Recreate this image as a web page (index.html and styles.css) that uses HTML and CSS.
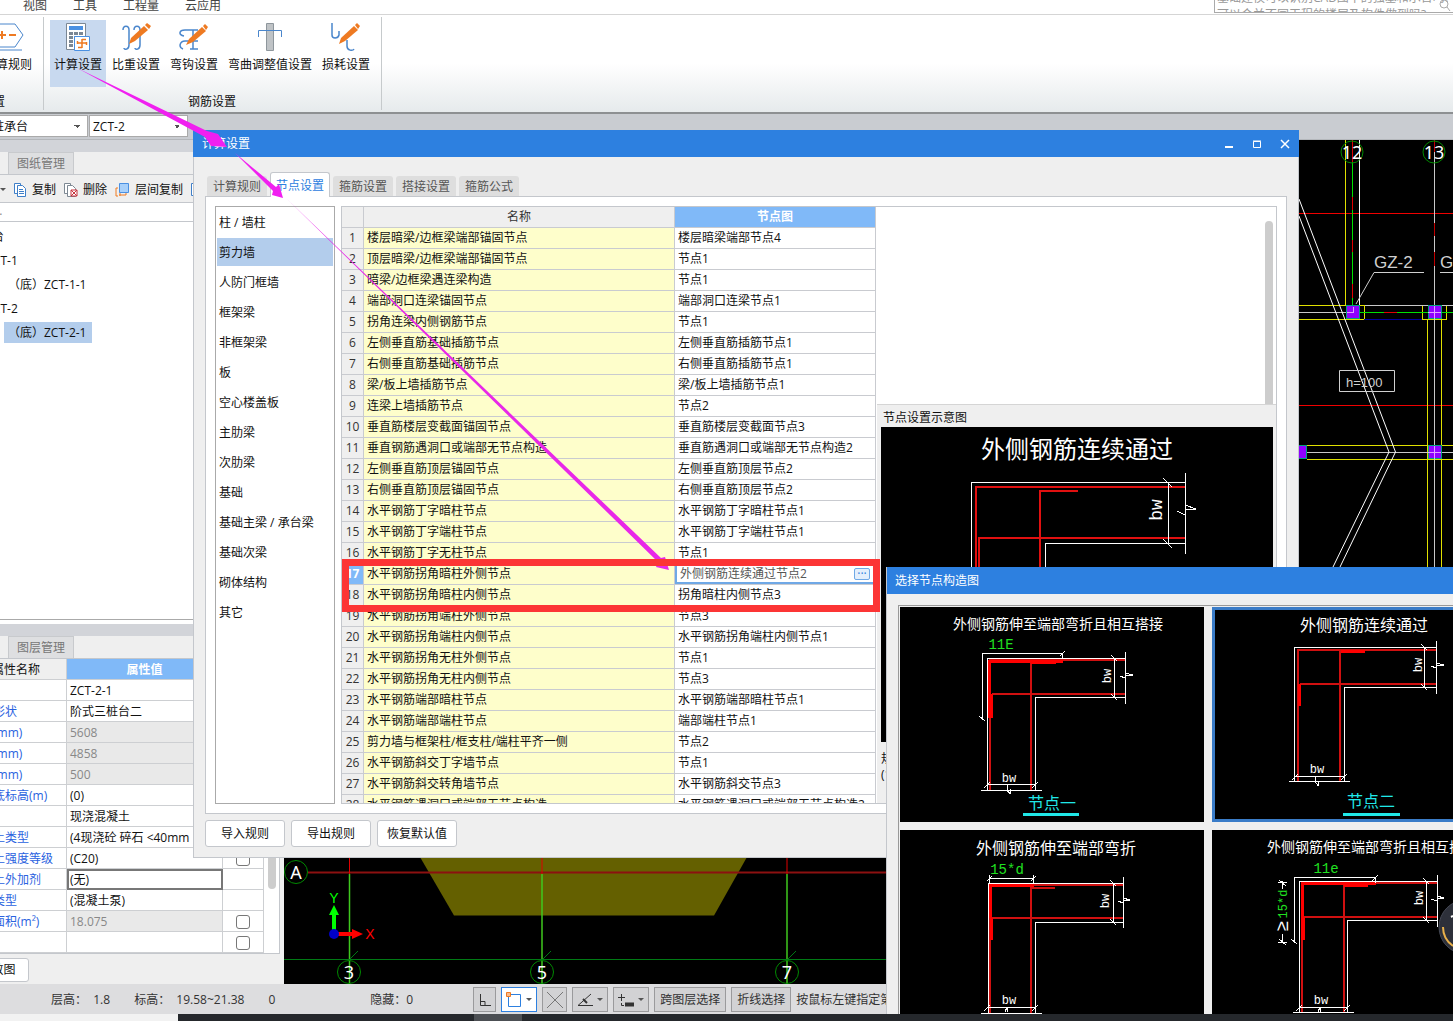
FILE: index.html
```
<!doctype html>
<html lang="zh-CN">
	<head>
		<meta charset="utf-8">
		<title>计算设置</title>
		<meta name="viewport" content="width=device-width,initial-scale=1.0">
		<link rel="stylesheet" href="styles.css">
	</head>
	<body>
		<div class="menuBar">
			<nav>
				<a href="#">视图</a>
				<a href="#">工具</a>
				<a href="#">工程量</a>
				<a href="#">云应用</a>
			</nav>
			<div class="ticker">
				<div class="tickerText">
					<p>基础建模可以识别CAD图中的独基和承台吗?</p>
					<p>可以合并不同工程的楼层及构件做到吗?</p>
				</div>
				<svg width="12" height="12" viewBox="0 0 12 12" fill="none" stroke="#aaa"><circle cx="5" cy="4" r="4"/><path d="M8 7l3 4"/></svg>
			</div>
		</div>

		<div class="ribbon">
			<section class="group first">
				<div class="tools">
					<button>
						<svg width="48" height="30" viewBox="-4 0 48 30" fill="none"><path d="M9 2h18l8 11-8 12H9L1 13z" stroke="#4a86cc"/><path d="M11 28h23" stroke="#4a86cc"/><path d="M10 13h8m-4-4v8m7-4h7" stroke="#ee7a22" stroke-width="2"/></svg>
						<span>计算规则</span>
					</button>
				</div>
				<h2>设置</h2>
			</section>
			<section class="group">
				<div class="tools">
					<button class="selected">
						<svg width="30" height="30" viewBox="0 0 30 30" fill="none"><path d="M3.500 1.500h19v26h-19z" fill="#fff" stroke="#7b8794"/><path d="M6 4h14v4H6z" fill="#4a90e2"/><path d="M6 10h4v3H6zm5 0h4v3h-4zm5 0h4v3h-4zM6 14h4v3H6zm5 0h4v3h-4zM6 18h4v3H6zM6 22h4v3H6z" fill="#7b8794"/><path d="M11.500 14.500h15v14h-15z" fill="#fff" stroke="#4a90e2"/><path d="M14 21h10M19 17v9M19 17.500h4M15 25.500h4M14.500 19v3M23.500 20v3" stroke="#ee7a22" stroke-width="1.500"/></svg>
						<span>计算设置</span>
					</button>
					<button>
						<svg width="30" height="30" viewBox="0 0 30 30" fill="none"><path d="M2 8c0-5 6-5 6 0v15c0 5-5 5-5 3M13 8c0-5 6-5 6 0v15c0 5-5 5-5 3" stroke="#4a86cc" stroke-width="1.500"/><path d="M8 22l2-6L23 4l4 4-13 11z" fill="#ee7a22"/><path d="M24 3l2-2 4 3-2 3z" fill="#ee7a22"/></svg>
						<span>比重设置</span>
					</button>
					<button>
						<svg width="30" height="30" viewBox="0 0 30 30" fill="none"><path d="M5 14c-6-1-5-6 1-6h13M4 27c-5-2-3-8 2-8h13M14 8v19m-3 0h8" stroke="#4a86cc" stroke-width="1.500"/><path d="M7 23l3-6L23 5l4 4-13 11z" fill="#ee7a22"/><path d="M24 4l2-2 3 3-2 3z" fill="#ee7a22"/></svg>
						<span>弯钩设置</span>
					</button>
					<button>
						<svg width="30" height="30" viewBox="0 0 30 30" fill="none"><path d="M3.500 15V8.500h23V15" stroke="#4a86cc"/><path d="M11.500 1.500h7v27h-7z" fill="#bfc3c6" stroke="#8e969c"/><path d="M11 8.500h8" stroke="#4a86cc"/></svg>
						<span>弯曲调整值设置</span>
					</button>
					<button>
						<svg width="30" height="30" viewBox="0 0 30 30" fill="none"><path d="M1 1v12c0 4 6 4 7 0V9M16 18v6c0 5 6 5 7 3" stroke="#4a86cc" stroke-width="1.500"/><path d="M8 22l2-6L23 4l4 4-13 11z" fill="#ee7a22"/><path d="M24 3l2-2 3 3-2 3z" fill="#ee7a22"/></svg>
						<span>损耗设置</span>
					</button>
				</div>
				<h2>钢筋设置</h2>
			</section>
		</div>

		<div class="selectBar">
			<select class="type" aria-label="构件类型"><option>桩承台</option></select>
			<select aria-label="构件"><option>ZCT-2</option></select>
		</div>

		<main>
			<aside class="dock">
				<div class="dockTabs"><button>构件列表</button><button class="off">图纸管理</button></div>
				<div class="dockTools">
					<button class="new">新建<i class="caret"></i></button>
					<button><svg width="13" height="14" viewBox="0 0 13 14" fill="#fff" stroke="#3f7fc8"><path d="M.5.5h6v10h-6z"/><path d="M3.500 2.500h5l3 3v8h-8zM5 6.500h4M5 8.500h5M5 10.500h5"/></svg>复制</button>
					<button><svg width="14" height="14" viewBox="0 0 14 14" fill="#fff" stroke="#7d8893"><path d="M.5.5h6v10h-6z"/><path d="M3.500 2.500h5l3 3v8h-8z"/><path d="M7 7h6v6H7zM7 7l6 6M13 7l-6 6" stroke="#c8323c"/></svg>删除</button>
					<button><svg width="15" height="14" viewBox="0 0 15 14" fill="none"><path d="M3 5H1v8M5 8v5M1 13h2m1-1h7v-2" stroke="#ee7a22"/><path d="M4.500.5h9v9h-9z" fill="#a8d0fa" stroke="#4a90e2"/></svg>层间复制</button>
					<button><svg width="13" height="14" viewBox="0 0 13 14" fill="#fff" stroke="#3f7fc8"><path d="M.5.5h9v12h-9z"/></svg></button>
				</div>
				<div class="filter">搜索...</div>
				<ul class="tree">
					<li><span>桩承台</span></li>
					<li class="sub"><span>ZCT-1</span></li>
					<li class="leaf"><span>（底）ZCT-1-1</span></li>
					<li class="sub"><span>ZCT-2</span></li>
					<li class="leaf"><span class="selected">（底）ZCT-2-1</span></li>
				</ul>
				<div class="dockTabs"><button>属性列表</button><button class="off">图层管理</button></div>
				<div class="props">
					<table>
						<tr><th class="name">属性名称</th><th class="value">属性值</th><th class="extra">附加</th></tr>
						<tr><td>名称</td><td>ZCT-2-1</td><td></td></tr>
						<tr><td class="blue">截面形状</td><td>阶式三桩台二</td><td></td></tr>
						<tr><td class="blue">长度(mm)</td><td class="locked">5608</td><td></td></tr>
						<tr><td class="blue">宽度(mm)</td><td class="locked">4858</td><td></td></tr>
						<tr><td class="blue">高度(mm)</td><td class="locked">500</td><td></td></tr>
						<tr><td class="blue">相对底标高(m)</td><td>(0)</td><td></td></tr>
						<tr><td>材质</td><td>现浇混凝土</td><td></td></tr>
						<tr><td class="blue">混凝土类型</td><td>(4现浇砼 碎石 &lt;40mm</td><td></td></tr>
						<tr><td class="blue">混凝土强度等级</td><td>(C20)</td><td><input type="checkbox" aria-label="附加强度等级"></td></tr>
						<tr><td class="blue">混凝土外加剂</td><td class="current">(无)</td><td></td></tr>
						<tr><td class="blue">泵送类型</td><td>(混凝土泵)</td><td></td></tr>
						<tr><td class="blue">截面面积(m²)</td><td class="locked">18.075</td><td><input type="checkbox" aria-label="附加截面面积"></td></tr>
						<tr><td></td><td></td><td><input type="checkbox" aria-label="附加"></td></tr>
					</table>
					<div class="scroll"></div>
				</div>
				<div class="dockFoot"><button>参数图</button></div>
			</aside>

			<svg class="cad" viewBox="284 140 1169 844" preserveAspectRatio="xMidYMid slice" fill="none">
				<!-- upper right plan -->
				<g shape-rendering="crispEdges">
					<path d="M1299 213.500h154M1299 405.500h154" stroke="#f00000"/>
					<path d="M1345.500 140v165M1299 305.500h65v14h-65M1422.500 305.500h24v14h-24zM1427.500 320v247M1441.500 320v247M1453 445.500h-146M1307 459.500h146" stroke="#e0e000"/>
					<path d="M1359.500 140v165" stroke="#fff"/>
					<path d="M1352.500 140v172M1359 312.500h94" stroke="#00e000"/>
					<path d="M1352.500 140v22m0 35v13m0 30v12m0 32v14M1384 312.500h13" stroke="#e00000"/>
					<path d="M1364 319.500h58" stroke="#0000a0"/>
					<path d="M1365 305.500h88M1299 312.500h53M1299 452.500h154M1434.500 140v427" stroke="#c8c8c8"/>
					<path d="M1434.500 140v12m0 71v13m0 16v14" stroke="#c00000"/>
					<g fill="#9000ff" stroke="#00a080">
						<path d="M1346.500 305.500h13v13h-13zM1428.500 305.500h13v13h-13zM1428.500 445.500h13v13h-13zM1293.500 445.500h13v13h-13z"/>
					</g>
					<path d="M1428 312.500h13M1434.500 306v13M1428 452.500h13M1434.500 446v13M1347 312.500h6v-6" stroke="#e0a0ff"/>
				</g>
				<path d="M1299 199l96.500 253L1340 567M1299 216l90 236-56 115" stroke="#fff"/>
				<path d="M1356 304l18-31.500h50M1440 272.500h13M1339.500 370.500h55v21h-55z" stroke="#d0d0d0"/>
				<g class="cadText">
					<text x="1374" y="268">GZ-2</text>
					<text x="1440" y="268">GZ-2</text>
					<text x="1346" y="387" class="small">h=100</text>
				</g>
				<g stroke="#008a00"><circle cx="1352" cy="152" r="11"/><circle cx="1434" cy="152" r="11"/></g>
				<g class="axisText"><text x="1352" y="159">12</text><text x="1434" y="159">13</text></g>
				<!-- lower plan with the pile cap -->
				<path d="M420 857l34 58.500h260L747 857z" fill="#646000"/>
				<path d="M308 872.500h640" stroke="#8c1010" stroke-width="2"/>
				<path d="M349.500 857v17M542 857v17M787 857v17" stroke="#e00000"/>
				<path d="M349.500 874v110M542 874v110M787 874v110" stroke="#3fc81e" stroke-width="1.500"/>
				<path d="M284 959.500h640M349 960l9-9M542 960l9-9M787 960l9-9" stroke="#007a14"/>
				<g stroke="#008a00"><circle cx="296" cy="872" r="11.500"/><circle cx="349" cy="972" r="11.500"/><circle cx="542" cy="972" r="11.500"/><circle cx="787" cy="972" r="11.500"/></g>
				<g class="axisText"><text x="296" y="879">A</text><text x="349" y="979">3</text><text x="542" y="979">5</text><text x="787" y="979">7</text></g>
				<path d="M334 934v-22" stroke="#0f0" stroke-width="4"/>
				<path d="M329 915l5-10 5 10z" fill="#0f0"/>
				<path d="M334 934h20" stroke="red" stroke-width="4"/>
				<path d="M352 929l11 5-11 5z" fill="red"/>
				<circle cx="334" cy="934" r="5" fill="#0000c8"/>
				<text class="ucs" x="334" y="903" fill="#0f0">Y</text>
				<text class="ucs" x="370" y="939" fill="red">X</text>
			</svg>
		</main>

		<footer class="status">
			<span>层高：&nbsp; 1.8</span>
			<span>标高：&nbsp; 19.58~21.38</span>
			<span>0</span>
			<span class="hiddenCount">隐藏：0</span>
			<div class="snap">
				<button aria-label="正交"><svg width="16" height="16" viewBox="0 0 16 16" fill="none" stroke="#333"><path d="M3.500 2v11.500H14M4 9.500h4v4"/></svg></button>
				<button class="on" aria-label="点选"><svg width="18" height="16" viewBox="0 0 18 16" fill="none"><path d="M3.500 2.500h12v12h-12z" stroke="#2d80e0"/><path d="M1.500.5h4v4h-4z" fill="#f9b98a" stroke="#ee7a22"/></svg><i class="caret"></i></button>
				<button aria-label="交点"><svg width="18" height="18" viewBox="0 0 18 18" fill="none" stroke="#777"><path d="M1 1l16 16M17 1L1 17"/></svg></button>
				<button aria-label="角度"><svg width="18" height="16" viewBox="0 0 18 16" fill="none" stroke="#333"><path d="M15 2L2 13.500h15"/><path d="M7 7l4 4" stroke-width="2"/></svg><i class="caret"></i></button>
				<button aria-label="偏移"><svg width="18" height="16" viewBox="0 0 18 16" fill="none" stroke="#333"><path d="M1 5.500h7M4.500 2v7M4.500 11v2.500H7"/><path d="M8 12.500h9" stroke-width="4"/></svg><i class="caret"></i></button>
				<button>跨图层选择</button>
				<button>折线选择</button>
			</div>
			<span class="hint">按鼠标左键指定第一个角点</span>
		</footer>
		<div class="taskbar"><div class="light"></div><div class="task"></div></div>

		<section class="dialog settings">
			<header>
				<h1>计算设置</h1>
				<button aria-label="最小化"><svg width="10" height="10" viewBox="0 0 10 10" stroke="#fff" stroke-width="2"><path d="M1 8h8"/></svg></button>
				<button aria-label="最大化"><svg width="10" height="10" viewBox="0 0 10 10" fill="none" stroke="#fff"><path d="M1.500 2.500h7v6h-7zM1 2h8"/></svg></button>
				<button aria-label="关闭"><svg width="10" height="10" viewBox="0 0 10 10" stroke="#fff" stroke-width="1.500"><path d="M1 1l8 8M9 1L1 9"/></svg></button>
			</header>
			<div class="tabs">
				<button>计算规则</button>
				<button class="selected">节点设置</button>
				<button>箍筋设置</button>
				<button>搭接设置</button>
				<button>箍筋公式</button>
			</div>
			<div class="panel">
				<ul class="kinds">
					<li>柱 / 墙柱</li>
					<li class="selected">剪力墙</li>
					<li>人防门框墙</li>
					<li>框架梁</li>
					<li>非框架梁</li>
					<li>板</li>
					<li>空心楼盖板</li>
					<li>主肋梁</li>
					<li>次肋梁</li>
					<li>基础</li>
					<li>基础主梁 / 承台梁</li>
					<li>基础次梁</li>
					<li>砌体结构</li>
					<li>其它</li>
				</ul>
				<div class="content">
					<div class="nodes">
						<table>
							<tr><th class="num"></th><th class="name">名称</th><th class="value">节点图</th></tr>
							<tr><th>1</th><td>楼层暗梁/边框梁端部锚固节点</td><td>楼层暗梁端部节点4</td></tr>
							<tr><th>2</th><td>顶层暗梁/边框梁端部锚固节点</td><td>节点1</td></tr>
							<tr><th>3</th><td>暗梁/边框梁遇连梁构造</td><td>节点1</td></tr>
							<tr><th>4</th><td>端部洞口连梁锚固节点</td><td>端部洞口连梁节点1</td></tr>
							<tr><th>5</th><td>拐角连梁内侧钢筋节点</td><td>节点1</td></tr>
							<tr><th>6</th><td>左侧垂直筋基础插筋节点</td><td>左侧垂直筋插筋节点1</td></tr>
							<tr><th>7</th><td>右侧垂直筋基础插筋节点</td><td>右侧垂直筋插筋节点1</td></tr>
							<tr><th>8</th><td>梁/板上墙插筋节点</td><td>梁/板上墙插筋节点1</td></tr>
							<tr><th>9</th><td>连梁上墙插筋节点</td><td>节点2</td></tr>
							<tr><th>10</th><td>垂直筋楼层变截面锚固节点</td><td>垂直筋楼层变截面节点3</td></tr>
							<tr><th>11</th><td>垂直钢筋遇洞口或端部无节点构造</td><td>垂直筋遇洞口或端部无节点构造2</td></tr>
							<tr><th>12</th><td>左侧垂直筋顶层锚固节点</td><td>左侧垂直筋顶层节点2</td></tr>
							<tr><th>13</th><td>右侧垂直筋顶层锚固节点</td><td>右侧垂直筋顶层节点2</td></tr>
							<tr><th>14</th><td>水平钢筋丁字暗柱节点</td><td>水平钢筋丁字暗柱节点1</td></tr>
							<tr><th>15</th><td>水平钢筋丁字端柱节点</td><td>水平钢筋丁字端柱节点1</td></tr>
							<tr><th>16</th><td>水平钢筋丁字无柱节点</td><td>节点1</td></tr>
							<tr class="current"><th>17</th><td>水平钢筋拐角暗柱外侧节点</td><td><div class="editor">外侧钢筋连续通过节点2<button aria-label="选择节点">···</button></div></td></tr>
							<tr><th>18</th><td>水平钢筋拐角暗柱内侧节点</td><td>拐角暗柱内侧节点3</td></tr>
							<tr><th>19</th><td>水平钢筋拐角端柱外侧节点</td><td>节点3</td></tr>
							<tr><th>20</th><td>水平钢筋拐角端柱内侧节点</td><td>水平钢筋拐角端柱内侧节点1</td></tr>
							<tr><th>21</th><td>水平钢筋拐角无柱外侧节点</td><td>节点1</td></tr>
							<tr><th>22</th><td>水平钢筋拐角无柱内侧节点</td><td>节点3</td></tr>
							<tr><th>23</th><td>水平钢筋端部暗柱节点</td><td>水平钢筋端部暗柱节点1</td></tr>
							<tr><th>24</th><td>水平钢筋端部端柱节点</td><td>端部端柱节点1</td></tr>
							<tr><th>25</th><td>剪力墙与框架柱/框支柱/端柱平齐一侧</td><td>节点2</td></tr>
							<tr><th>26</th><td>水平钢筋斜交丁字墙节点</td><td>节点1</td></tr>
							<tr><th>27</th><td>水平钢筋斜交转角墙节点</td><td>水平钢筋斜交节点3</td></tr>
							<tr><th>28</th><td>水平钢筋遇洞口或端部无节点构造</td><td>水平钢筋遇洞口或端部无节点构造2</td></tr>
						</table>
					</div>
					<div class="side">
						<div class="blank"><div class="scroll"></div></div>
						<div class="preview">
							<h2>节点设置示意图</h2>
							<svg viewBox="881 427 392 316" preserveAspectRatio="xMidYMin slice" fill="none" shape-rendering="crispEdges">
								<path d="M976 743V487H1185M1040 743V491H1078M979 743V538H1185" stroke="#e01010" stroke-width="2"/>
								<path d="M971.500 743V482.500H1185M1045.500 743V543.500H1185M1185.500 473v81M1168.500 482v62M1163 478l9 9M1163 539l9 9M1177 511l8 4v-10l11 4-11 1" stroke="#fff"/>
								<text class="draft" x="1077" y="458" font-size="24">外侧钢筋连续通过</text>
								<text class="draft bw" transform="translate(1162 510) rotate(-90)" font-size="18">bw</text>
							</svg>
							<p>规范说明：<br>(11G101-1)</p>
						</div>
					</div>
				</div>
			</div>
			<div class="buttons">
				<button>导入规则</button>
				<button>导出规则</button>
				<button>恢复默认值</button>
			</div>
		</section>

		<section class="dialog picker">
			<header><h1>选择节点构造图</h1></header>
			<div class="cards">
				<svg viewBox="900 607 304 215" fill="none" shape-rendering="crispEdges">
					<path d="M990 790V660h135M1031 790V663h25M992 694h133" stroke="#d01010" stroke-width="2"/>
					<path d="M989.500 718v-56.500h73M991.500 718v-24M1031 662.500h25" stroke="red" stroke-width="3"/>
					<path d="M987.500 790V658.500H1125M1035.500 790v-92.500H1125M1125.500 652v52M1114.500 658v40M982.500 719v-65.500h80v5M979 716l6 5M1060 656l5-5M1111 655l6 6M1111 694l6 6M1120 676l5 2v-5l8 2-8 1M981 790.500h61M987 784.500h49M984 788l6-6M1032 788l6-6M1007 784v6l3 4 1-5" stroke="#fff"/>
					<text class="draft" x="1058" y="629" font-size="14">外侧钢筋伸至端部弯折且相互搭接</text>
					<text class="draft green" x="1001" y="649" font-size="14">11E</text>
					<text class="draft bw" transform="translate(1111 676) rotate(-90)" font-size="12">bw</text>
					<text class="draft bw" x="1009" y="782" font-size="12">bw</text>
					<text class="draft cyan" x="1052" y="809" font-size="16">节点一</text>
					<path d="M1023 814.500h56" stroke="#20e8e8" stroke-width="3"/>
				</svg>
				<svg class="selected" viewBox="1212 607 304 215" fill="none" shape-rendering="crispEdges">
					<path d="M1298 781V650h138M1340 781V652h25M1300 684h136" stroke="#d01010" stroke-width="2"/>
					<path d="M1299.500 706v-22M1341 651.500h24" stroke="red" stroke-width="3"/>
					<path d="M1294.500 781V647.500h142M1344.500 781v-93.500h92M1436.500 641v53M1424.500 647v41M1421 644l6 6M1421 684l6 6M1431 666l5 2v-5l8 2-8 1M1289 781.500h61M1294 776.500h51M1292 780l6-6M1341 780l6-6M1315 776v5l3 5 1-5" stroke="#fff"/>
					<text class="draft" x="1364" y="631" font-size="16">外侧钢筋连续通过</text>
					<text class="draft bw" transform="translate(1422 665) rotate(-90)" font-size="12">bw</text>
					<text class="draft bw" x="1317" y="773" font-size="12">bw</text>
					<text class="draft cyan" x="1371" y="807" font-size="16">节点二</text>
					<path d="M1343 814.500h57" stroke="#20e8e8" stroke-width="3"/>
				</svg>
				<svg viewBox="900 830 304 215" fill="none" shape-rendering="crispEdges">
					<path d="M990 1013V885h133M1031 1013V888h24M991 918h132" stroke="#d01010" stroke-width="2"/>
					<path d="M990.500 918v-32.500h43M991.500 940v-22" stroke="red" stroke-width="3"/>
					<path d="M988.500 1013V883.500h135M1035.500 1013v-90.500h88M1123.500 877v51M1113.500 883v40M1110 880l6 6M1110 919l6 6M989 878.500h45M989.500 875v9M1033.500 875v9M987 881l5-5M1031 881l5-5M1118 901l5 2v-5l7 2-7 1M981 1013.500h61M987 1007.500h49M984 1011l6-6M1032 1011l6-6M1005 1012l2-5 1 5" stroke="#fff"/>
					<text class="draft" x="1056" y="854" font-size="16">外侧钢筋伸至端部弯折</text>
					<text class="draft green" x="1007" y="874" font-size="14">15*d</text>
					<text class="draft bw" transform="translate(1109 901) rotate(-90)" font-size="12">bw</text>
					<text class="draft bw" x="1009" y="1004" font-size="12">bw</text>
				</svg>
				<svg viewBox="1212 830 304 215" fill="none" shape-rendering="crispEdges">
					<path d="M1302 1013V883h135M1344 1013V886h24M1303 917h134" stroke="#d01010" stroke-width="2"/>
					<path d="M1302.500 940v-56.500h73M1303.500 940v-23M1344 885.500h24" stroke="red" stroke-width="3"/>
					<path d="M1299.500 1013V881.500h138M1347.500 1013v-92.500h90M1437.500 875v52M1426.500 881v40M1423 878l6 6M1423 917l6 6M1294.500 942v-64.500h80.500v5M1291 939l6 5M1372 881l6-6M1282.500 881v8M1278 882.500h9M1279 880l7 6M1282.500 934v9M1278 942.500h9M1279 939l7 6M1431 899l6 2v-5l7 2-7 1M1293 1012.500h61M1299 1007.500h49M1296 1011l6-6M1344 1011l6-6M1318 1012l2-5 1 5" stroke="#fff"/>
					<text class="draft" x="1372" y="852" font-size="14">外侧钢筋伸至端部弯折且相互搭接</text>
					<text class="draft green" x="1326" y="873" font-size="14">11e</text>
					<text class="draft green" transform="translate(1287 904) rotate(-90)" font-size="12">15*d</text>
					<text class="draft" transform="translate(1288 926) rotate(-90)" font-size="18">≥</text>
					<text class="draft bw" transform="translate(1423 898) rotate(-90)" font-size="12">bw</text>
					<text class="draft bw" x="1321" y="1004" font-size="12">bw</text>
				</svg>
			</div>
			<svg class="bubble" width="15" height="56" viewBox="0 0 15 56" fill="none"><circle cx="28" cy="28" r="27" fill="#2d303a" stroke="#454955"/><path d="M5 28q0 12 10 19" stroke="#e8b04a" stroke-width="2"/><path d="M13 18l2-1" stroke="#fff" stroke-width="2"/></svg>
		</section>

		<!-- markup drawn over the windows -->
		<svg class="marks" viewBox="0 0 1453 1021" width="1453" height="1021">
			<path d="M77 68L207 131l11 3 9 13-16-1-6-9z" fill="#f020f0"/>
			<path d="M235 153l41 34 3-3 4 14-11-3 1-4z" fill="#f020f0"/>
			<path d="M287 199L661 558l4-1 4 13-13-3 2-5z" fill="#e828e8"/>
			<rect x="345.500" y="562.500" width="531" height="46" fill="none" stroke="#fc3535" stroke-width="7"/>
		</svg>
	</body>
</html>
```
FILE: styles.css
```
*{
	margin: 0;
	padding: 0;
	box-sizing: border-box;
}
body{
	display: flex;
	flex-direction: column;
	position: relative;
	height: 100vh;
	overflow: hidden;
	background: #efefef;
	color: #111;
	font: 12px/16px "Open Sans", "Noto Sans CJK SC", sans-serif;
}
button, select, input{
	font: inherit;
	color: inherit;
}
button{
	border: none;
	background: none;
	white-space: nowrap;
}
ul{
	list-style: none;
}
h1, h2{
	font-size: 12px;
	font-weight: normal;
}
table{
	border-spacing: 0;
	table-layout: fixed;
}
.caret{
	display: inline-block;
	border: 3px solid transparent;
	border-top-color: #555;
	border-bottom: 0;
}

/**
 * menu and ribbon
 */
.menuBar{
	display: flex;
	justify-content: space-between;
	height: 15px;
	flex: none;
	overflow: hidden;
	background: #fff;
	border-bottom: 1px solid #d5d5d5;
}
.menuBar nav{
	display: flex;
	gap: 26px;
	padding-left: 23px;
	line-height: 12px;
}
.menuBar a{
	color: #444;
	text-decoration: none;
}
.ticker{
	display: flex;
	width: 239px;
	height: 13px;
	padding: 0 2px;
	overflow: hidden;
	color: #999;
	border: 1px solid #aaa;
	border-top: 0;
	border-right: 0;
}
.ticker svg{
	flex: none;
}
.tickerText{
	display: flex;
	flex-direction: column;
	justify-content: center;
	flex: 1;
	min-width: 0;
	line-height: 17px;
	white-space: nowrap;
}
.ribbon{
	display: flex;
	height: 99px;
	flex: none;
	padding: 2px 0;
	background: linear-gradient(#fff 50%, #e6eaec);
	border-bottom: 2px solid #8d9092;
}
.group{
	display: flex;
	flex-direction: column;
	justify-content: space-between;
	padding: 3px 7px 0 6px;
	border-right: 1px solid #c6cacc;
}
.group h2{
	text-align: center;
}
.tools{
	display: flex;
	gap: 2px;
}
.tools button{
	display: flex;
	flex-direction: column;
	align-items: center;
	gap: 5px;
	height: 67px;
	padding: 2px 4px;
}
.tools .selected{
	background: #c8d9ef;
}
.group.first{
	width: 44px;
	align-items: flex-end;
	overflow: hidden;
}
.group.first h2{
	padding-right: 31px;
	white-space: nowrap;
}
.selectBar{
	display: flex;
	gap: 1px;
	height: 26px;
	flex: none;
	padding: 1px 0 2px;
	background: #c9ccd1;
	border-bottom: 1px solid #b4b7bb;
}
.selectBar select{
	width: 99px;
	padding: 2px 3px 0;
	appearance: none;
	border: 1px solid #aaa;
	background: linear-gradient(45deg, transparent 50%, #555 50%) right 10px center/3px 3px no-repeat, linear-gradient(-45deg, transparent 50%, #555 50%) right 7px center/3px 3px no-repeat, #fff;
}
.selectBar .type{
	width: 100px;
	margin-left: -12px;
}

/**
 * left dock, it runs off the left edge of the window
 */
main{
	display: flex;
	flex: 1;
	min-height: 0;
}
.dock{
	display: flex;
	flex-direction: column;
	width: 318px;
	flex: none;
	margin-left: -34px;
	border-right: 4px solid #efefef;
}
.dockTabs{
	display: flex;
	flex: none;
	height: 35px;
	padding-top: 12px;
	background: linear-gradient(#d2d4d9 12px, #efefef 12px);
	border-bottom: 1px solid #c4c7cc;
}
.dockTabs button{
	width: 42px;
	overflow: hidden;
	color: transparent;
}
.dockTabs .off{
	width: 66px;
	color: #777;
	background: #dedfe1;
	border: 1px solid #c8cacd;
	border-bottom: 0;
}
.dockTools{
	display: flex;
	align-items: center;
	gap: 8px;
	height: 28px;
	flex: none;
	padding: 2px 0 0 6px;
	border-bottom: 1px solid #c4c7cc;
}
.dockTools button{
	display: flex;
	align-items: center;
	gap: 5px;
}
.dockTools .new{
	width: 34px;
	gap: 4px;
}
.filter{
	height: 19px;
	flex: none;
	padding-left: 3px;
	background: #fff;
	color: #888;
	border-bottom: 1px solid #c4c7cc;
}
.tree{
	flex: 1;
	min-height: 0;
	padding-top: 3px;
	overflow: hidden;
	line-height: 24px;
	background: #fff;
	border-bottom: 1px solid #aaa;
}
.tree + .dockTabs{
	height: 39px;
	padding-top: 16px;
	background: linear-gradient(#fff 4px, #d2d4d9 4px, #d2d4d9 16px, #efefef 16px);
}
.tree span{
	padding: 2px 4px 2px 2px;
}
.tree .sub{
	padding-left: 18px;
}
.tree .leaf{
	padding-left: 38px;
}
.tree .leaf span{
	padding: 2px 6px 2px 4px;
}
.tree .selected{
	background: #b3cdec;
}
.props{
	display: flex;
	flex: none;
	justify-content: space-between;
	background: #fff;
	border-right: 1px solid #c4c7cc;
	border-bottom: 1px solid #c4c7cc;
}
.props table{
	width: 298px;
}
.props th, .props td{
	height: 21px;
	padding: 1px 3px 0;
	overflow: hidden;
	font-weight: normal;
	white-space: nowrap;
	border: 1px solid #cdcfd2;
	border-top: 0;
	border-left: 0;
}
.props th{
	background: #efefef;
}
.props .name{
	width: 101px;
}
.props .value{
	width: 156px;
	color: #fff;
	background: #80b9f8;
	font-weight: bold;
}
.props .blue{
	color: #2a62e0;
}
.props .locked{
	color: #888;
	background: #e9e9e9;
}
.props .current{
	padding: 0 1px;
	border: 2px solid #777;
}
.props input{
	display: block;
	width: 14px;
	height: 14px;
	margin: 0 auto;
	appearance: none;
	background: #fff;
	border: 1px solid #777;
	border-radius: 3px;
}
.props .scroll{
	width: 8px;
	height: 230px;
	margin-right: 3px;
	background: #cdcdcd;
	border-radius: 4px;
}
.dockFoot{
	height: 30px;
	flex: none;
	padding: 4px 0 2px;
}
.dockFoot button{
	width: 63px;
	height: 24px;
	background: #fff;
	border: 1px solid #c4c7cc;
	border-radius: 3px;
}
.cad{
	flex: 1;
	min-width: 0;
	height: 100%;
	background: #000;
}
.cadText{
	font: 17px "Liberation Sans", sans-serif;
	fill: #d0d0d0;
}
.cadText .small{
	font-size: 13px;
}
.axisText{
	font: 18px "Noto Sans", sans-serif;
	text-anchor: middle;
	fill: #fff;
}
.ucs{
	font: 14px "Liberation Sans", sans-serif;
	text-anchor: middle;
}

/**
 * status bar and task bar
 */
.status{
	display: flex;
	align-items: center;
	gap: 24px;
	height: 30px;
	flex: none;
	padding: 1px 0 0 51px;
	background: #dddddf;
	color: #333;
	white-space: nowrap;
}
.hiddenCount{
	margin-left: 71px;
}
.snap{
	display: flex;
	gap: 5px;
	margin-left: 36px;
}
.snap button{
	display: flex;
	align-items: center;
	gap: 6px;
	height: 25px;
	padding: 0 5px;
	background: #d2d2d4;
	border: 1px solid #9a9a9c;
}
.snap .on{
	background: #fff;
	border-color: #2d80e0;
}
.snap svg{
	margin: 0 -3px 0 -2px;
}
.snap .caret{
	margin-right: -1px;
}
.hint{
	margin-left: -19px;
}
.taskbar{
	display: flex;
	height: 7px;
	flex: none;
	background: #25282c;
}
.light{
	width: 178px;
	background: #f2f2f2;
}
.task{
	width: 48px;
	margin-left: 296px;
	background: #4c4f53;
}

/**
 * floating windows
 */
.dialog{
	display: flex;
	flex-direction: column;
	position: absolute;
	background: #efefef;
	border: 1px solid #c4c7cc;
	border-top: 0;
}
.dialog header{
	display: flex;
	align-items: center;
	gap: 18px;
	height: 27px;
	flex: none;
	margin: 0 -1px;
	padding: 0 9px;
	color: #fff;
	background: #2d80e0;
}
.dialog h1{
	flex: 1;
}
.dialog header button{
	display: flex;
}
.settings{
	left: 193px;
	top: 130px;
	right: 154px;
	bottom: 163px;
}
.tabs{
	display: flex;
	align-items: flex-end;
	gap: 3px;
	height: 39px;
	flex: none;
	padding-left: 13px;
}
.tabs button{
	width: 60px;
	height: 20px;
	padding-top: 2px;
	color: #555;
	background: #dedede;
	border-radius: 3px 3px 0 0;
}
.tabs .selected{
	z-index: 1;
	height: 25px;
	margin-bottom: -1px;
	color: #2d80e0;
	background: #fff;
	border: 1px solid #c4c7cc;
	border-bottom: 0;
}
.panel{
	display: flex;
	gap: 6px;
	flex: 1;
	min-height: 0;
	margin: 0 11px;
	padding: 9px;
	background: #fff;
	border: 1px solid #c4c7cc;
}
.kinds{
	display: flex;
	flex-direction: column;
	gap: 2px;
	width: 120px;
	flex: none;
	padding: 1px;
	border: 1px solid #aaa;
	line-height: 30px;
}
.kinds li{
	height: 28px;
	padding-left: 2px;
}
.kinds .selected{
	background: #b3cdec;
}
.content{
	display: flex;
	gap: 1px;
	flex: 1;
	min-width: 0;
	border: 1px solid #c4c7cc;
}
.nodes{
	flex: none;
	overflow: hidden;
}
.nodes table{
	width: 534px;
}
.nodes td, .nodes th{
	height: 21px;
	padding: 0 3px;
	overflow: hidden;
	font-weight: normal;
	white-space: nowrap;
	border: 1px solid #c9cbd0;
	border-top: 0;
	border-left: 0;
}
.nodes th{
	padding: 0;
	color: #333;
	background: #efefef;
}
.nodes td:nth-child(2){
	background: #fefecb;
}
.nodes .num{
	width: 22px;
}
.nodes .name{
	width: 311px;
}
.nodes .value{
	color: #fff;
	background: #80b9f8;
	font-weight: bold;
}
.nodes .current th{
	color: #fff;
	background: #80b9f8;
	font-weight: bold;
}
.nodes .current td:last-child{
	padding: 0;
}
.editor{
	display: flex;
	align-items: center;
	justify-content: space-between;
	height: 20px;
	padding: 0 3px;
	color: #555;
	border: 2px solid #6fa8e6;
}
.editor button{
	width: 16px;
	height: 12px;
	line-height: 8px;
	color: #2d80e0;
	background: #e3effc;
	border: 1px solid #6fa8e6;
	border-radius: 2px;
}
.side{
	display: flex;
	flex-direction: column;
	flex: 1;
	min-width: 0;
}
.blank{
	height: 198px;
	flex: none;
	padding: 14px 3px 0 0;
	border-bottom: 1px solid #d5d5d5;
}
.blank .scroll{
	width: 8px;
	height: 100%;
	margin-left: auto;
	background: #cdcdcd;
	border-radius: 4px 4px 0 0;
}
.preview{
	display: flex;
	flex-direction: column;
	flex: 1;
	min-height: 0;
	padding: 5px 3px 0 4px;
	background: #efefef;
}
.preview h2{
	padding: 0 0 1px 2px;
}
.preview svg{
	flex: 1;
	min-height: 0;
	background: #000;
}
.preview p{
	height: 61px;
	padding-top: 9px;
}
.buttons{
	display: flex;
	gap: 6px;
	padding: 6px 11px 10px;
}
.buttons button{
	width: 80px;
	height: 27px;
	background: #fff;
	border: 1px solid #c4c7cc;
	border-radius: 3px;
}
.picker{
	left: 886px;
	top: 567px;
	right: 0;
	bottom: 7px;
	overflow: hidden;
	border-right: 0;
	border-bottom: 0;
}
.cards{
	display: grid;
	grid-template-columns: repeat(2, 304px);
	gap: 8px;
	flex: 1;
	min-height: 0;
	margin: 11px 0 0 11px;
	padding: 1px;
	overflow: hidden;
	border: 1px solid #999;
	border-right: 0;
	border-bottom: 0;
}
.cards svg{
	width: 304px;
	height: 215px;
	background: #000;
}
.cards .selected{
	outline: 3px solid #3a7cc8;
	outline-offset: -3px;
}
.draft{
	font-family: "Liberation Mono", "Noto Sans CJK SC", monospace;
	font-weight: 400;
	text-anchor: middle;
	fill: #fff;
}
.draft.green{
	fill: #20e020;
}
.draft.cyan{
	fill: #20e8e8;
}
.bubble{
	position: absolute;
	right: 0;
	bottom: 59px;
}
.marks{
	position: absolute;
	z-index: 2;
	left: 0;
	top: 0;
	pointer-events: none;
}
```
